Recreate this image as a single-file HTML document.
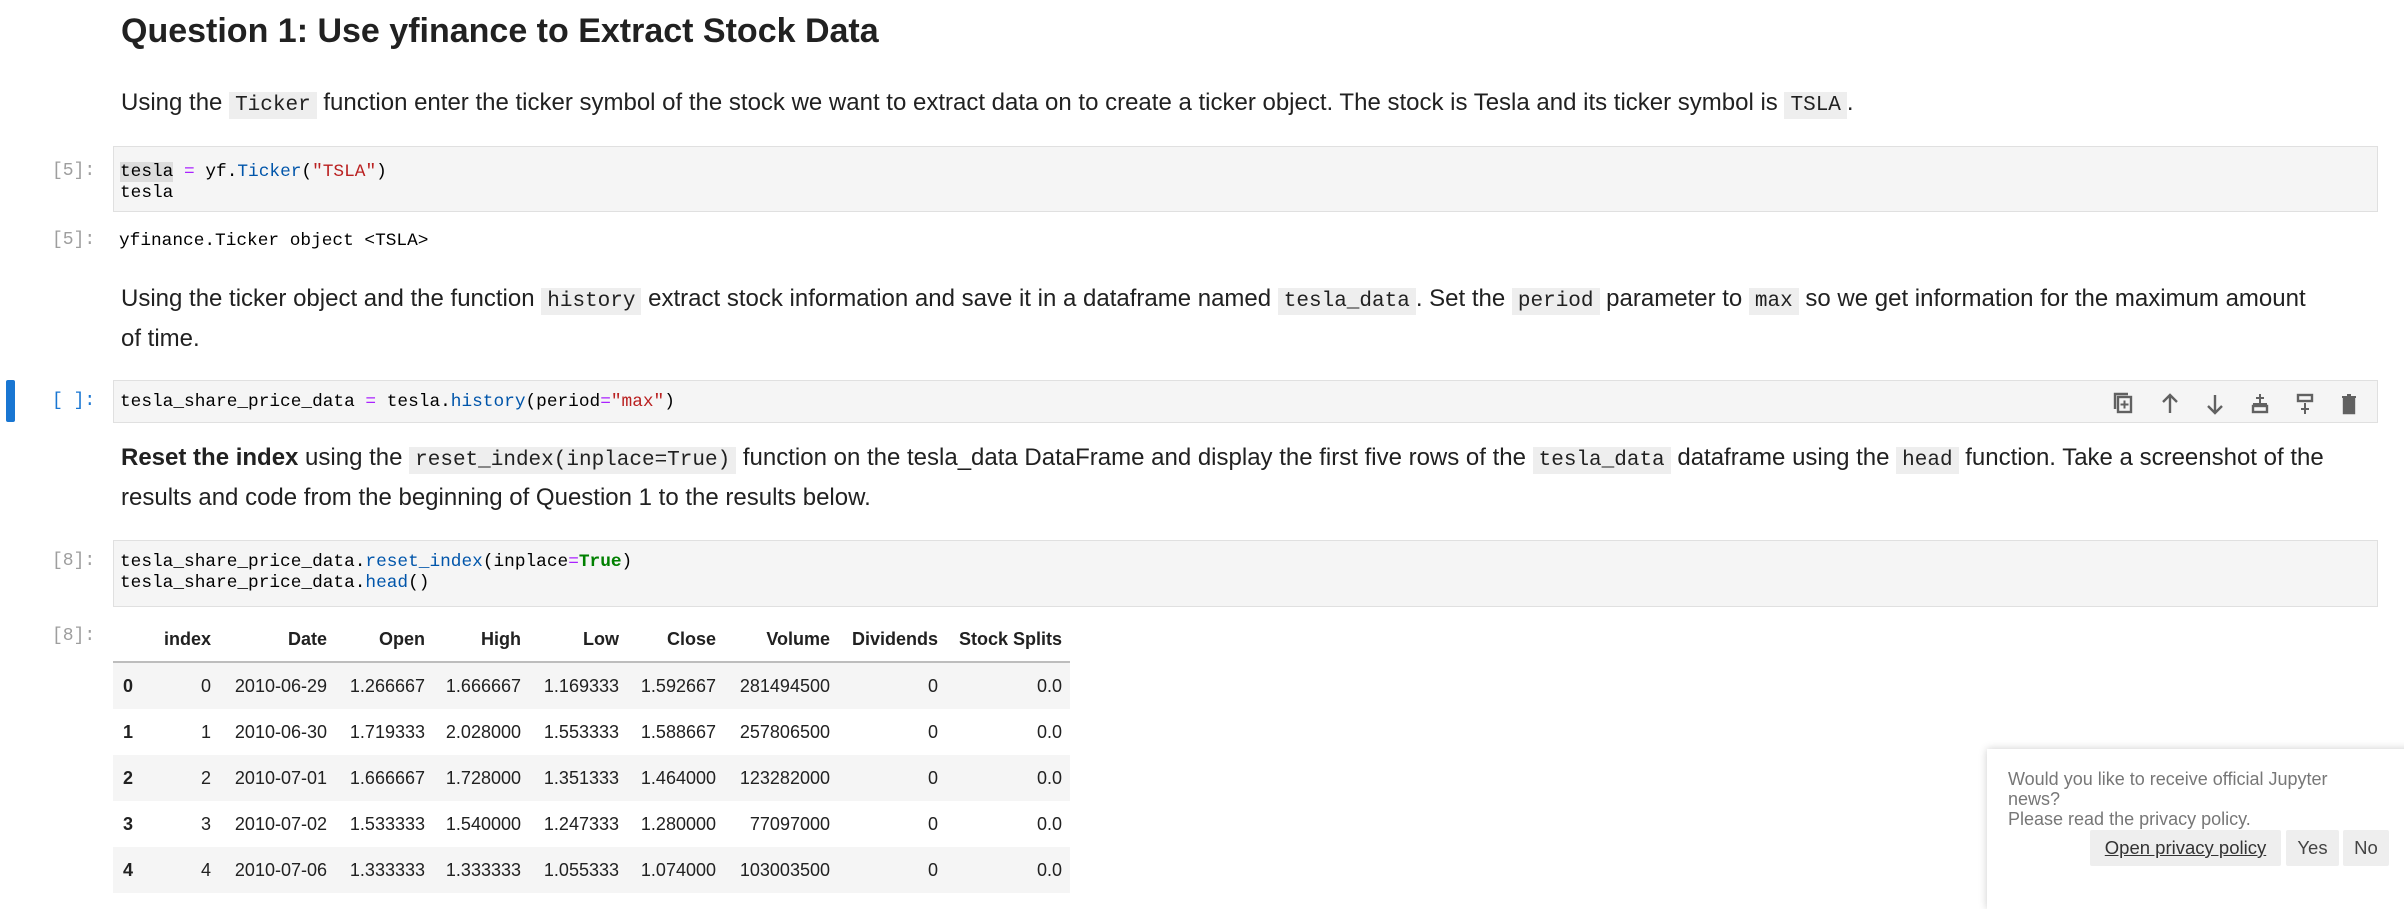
<!DOCTYPE html>
<html><head><meta charset="utf-8"><style>
body{margin:0;width:2404px;height:882px;background:#fff;position:relative;overflow:hidden;font-family:"Liberation Sans",sans-serif;color:#212121}
.a{position:absolute;white-space:nowrap}
.h{font-size:34px;font-weight:bold;left:121px;top:12px}
.p{font-size:24px;left:121px;line-height:37px}
code{font-family:"Liberation Mono",monospace;background:#eee;padding:2px 6px;font-size:21px}
.cell{position:absolute;left:113px;width:2265px;background:#f5f5f5;border:1px solid #e0e0e0;box-sizing:border-box}
.m{font-family:"Liberation Mono",monospace;font-size:17.8px;line-height:21px;color:#000}
.pr{font-family:"Liberation Mono",monospace;font-size:18px;color:#9e9e9e;left:52px}
.pb{color:#1976d2}
.k{color:#aa22ff}.f{color:#0055aa}.s{color:#ba2121}.t{color:#008000;font-weight:bold}
table{position:absolute;left:113px;top:617px;border-collapse:collapse;font-size:18px}
td,th{text-align:right;padding:0 8px;height:46px}
th{font-weight:bold}
thead th{border-bottom:2px solid #bdbdbd;height:44px}
tbody tr:nth-child(odd){background:#f5f5f5}
tbody th{text-align:left;padding-left:10px}
.pop{position:absolute;left:1987px;top:749px;width:440px;height:160px;background:#fff;box-shadow:0 0 8px rgba(0,0,0,.2);font-family:"Liberation Sans",sans-serif;color:#777;font-size:18px;line-height:20px}
.btn{position:absolute;top:81px;height:36px;background:#eee;color:#444;font-size:18.5px;line-height:36px;text-align:center;border-radius:2px}
</style></head><body>
<div class="a h">Question 1: Use yfinance to Extract Stock Data</div>
<div class="a p" style="top:84px">Using the <code>Ticker</code> function enter the ticker symbol of the stock we want to extract data on to create a ticker object. The stock is Tesla and its ticker symbol is <code>TSLA</code>.</div>

<div class="a pr" style="top:161px">[5]:</div>
<div class="cell" style="top:146px;height:66px"><div class="a m" style="left:6px;top:15px"><span style="background:#ddd">tesla</span> <span class="k">=</span> yf.<span class="f">Ticker</span>(<span class="s">"TSLA"</span>)<br>tesla</div></div>
<div class="a pr" style="top:230px">[5]:</div>
<div class="a m" style="left:119px;top:231px">yfinance.Ticker object &lt;TSLA&gt;</div>

<div class="a p" style="top:280px">Using the ticker object and the function <code>history</code> extract stock information and save it in a dataframe named <code>tesla_data</code>. Set the <code>period</code> parameter to <code>max</code> so we get information for the maximum amount<br>of time.</div>

<div class="a" style="left:6px;top:380px;width:9px;height:42px;background:#1976d2;border-radius:2px"></div>
<div class="a pr pb" style="top:391px">[ ]:</div>
<div class="cell" style="top:380px;height:43px"><div class="a m" style="left:6px;top:11px">tesla_share_price_data <span class="k">=</span> tesla.<span class="f">history</span>(period<span class="k">=</span><span class="s">"max"</span>)</div></div>
<svg class="a" style="left:2112px;top:391px" width="260" height="26" viewBox="0 0 260 26" fill="none" stroke="#616161" stroke-width="2.4">
<rect x="6" y="6" width="13" height="15"/><path d="M3 18V3h13"/><path d="M12.5 9.5v8M8.5 13.5h8" stroke-width="2"/>
<path d="M58 22V4M51 11l7-7 7 7"/>
<path d="M103 4v18M96 15l7 7 7-7"/>
<rect x="141" y="15" width="14" height="6"/><path d="M148 3v9M144 7h8M141 13h14" stroke-width="2"/>
<rect x="186" y="4" width="14" height="6"/><path d="M193 12v11M189 18h8" stroke-width="2"/>
<path d="M232 8h10v14h-10z" fill="#616161"/><path d="M230 6h14M235 4h4" stroke-width="2"/>
</svg>

<div class="a p" style="top:439px"><b>Reset the index</b> using the <code>reset_index(inplace=True)</code> function on the tesla_data DataFrame and display the first five rows of the <code>tesla_data</code> dataframe using the <code>head</code> function. Take a screenshot of the<br>results and code from the beginning of Question 1 to the results below.</div>

<div class="a pr" style="top:551px">[8]:</div>
<div class="cell" style="top:540px;height:67px"><div class="a m" style="left:6px;top:11px">tesla_share_price_data.<span class="f">reset_index</span>(inplace<span class="k">=</span><span class="t">True</span>)<br>tesla_share_price_data.<span class="f">head</span>()</div></div>
<div class="a pr" style="top:626px">[8]:</div>
<table>
<thead><tr><th style="width:14px"></th><th style="width:60px">index</th><th style="width:100px">Date</th><th style="width:82px">Open</th><th style="width:80px">High</th><th style="width:82px">Low</th><th style="width:81px">Close</th><th style="width:98px">Volume</th><th style="width:92px">Dividends</th><th style="width:108px">Stock Splits</th></tr></thead>
<tbody>
<tr><th>0</th><td>0</td><td>2010-06-29</td><td>1.266667</td><td>1.666667</td><td>1.169333</td><td>1.592667</td><td>281494500</td><td>0</td><td>0.0</td></tr>
<tr><th>1</th><td>1</td><td>2010-06-30</td><td>1.719333</td><td>2.028000</td><td>1.553333</td><td>1.588667</td><td>257806500</td><td>0</td><td>0.0</td></tr>
<tr><th>2</th><td>2</td><td>2010-07-01</td><td>1.666667</td><td>1.728000</td><td>1.351333</td><td>1.464000</td><td>123282000</td><td>0</td><td>0.0</td></tr>
<tr><th>3</th><td>3</td><td>2010-07-02</td><td>1.533333</td><td>1.540000</td><td>1.247333</td><td>1.280000</td><td>77097000</td><td>0</td><td>0.0</td></tr>
<tr><th>4</th><td>4</td><td>2010-07-06</td><td>1.333333</td><td>1.333333</td><td>1.055333</td><td>1.074000</td><td>103003500</td><td>0</td><td>0.0</td></tr>
</tbody></table>

<div class="pop">
<div class="a" style="left:21px;top:20px;white-space:normal;width:320px">Would you like to receive official Jupyter news?<br>Please read the privacy policy.</div>
<div class="btn" style="left:103px;width:191px"><span style="text-decoration:underline;color:#333">Open privacy policy</span></div>
<div class="btn" style="left:299px;width:53px">Yes</div>
<div class="btn" style="left:356px;width:46px">No</div>
</div>
</body></html>
